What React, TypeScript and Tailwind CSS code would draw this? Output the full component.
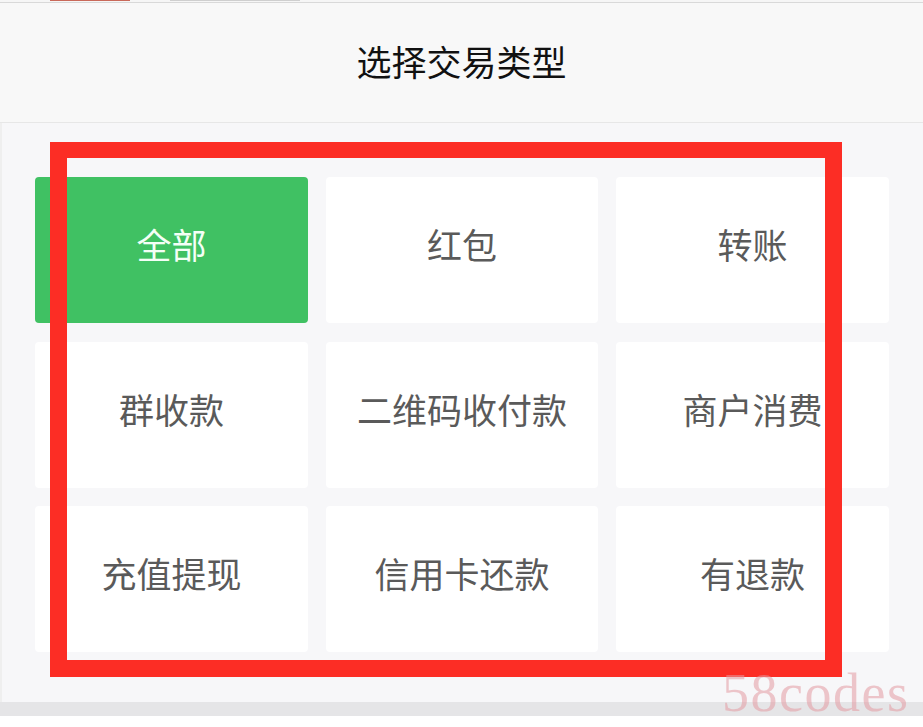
const TYPES = ['全部', '红包', '转账', '群收款', '二维码收付款', '商户消费', '充值提现', '信用卡还款', '有退款'];

export default function App() {
  const active = '全部';

  return (
    <div className="relative w-[923px] h-[727px] overflow-hidden bg-white font-['Noto_Sans_CJK_SC',sans-serif]">
      {/* cropped strip from the page above */}
      <div className="flex h-[3px] items-start border-b border-[#d9d9d9] bg-[#f6f6f6]">
        <div className="ml-[50px] h-[1px] w-[80px] bg-[#c9695a]" />
        <div className="ml-[40px] h-[1px] w-[130px] bg-[#cfcfcf]" />
      </div>

      <div className="flex h-[120px] items-center justify-center border-b border-[#e7e7e7] bg-[#f8f8f8] pb-[5px]">
        <h1 className="text-[35px] leading-none text-[#111]">选择交易类型</h1>
      </div>

      <div className="h-[579px] border-l-2 border-[#efefef] bg-[#f7f7f9] pl-[33px] pt-[54px]">
        <div className="grid grid-cols-[273px_272px_273px] auto-rows-[146px] gap-x-[18px] gap-y-[18.5px]">
          {TYPES.map(type => (
            <div
              key={type}
              className={`flex items-center justify-center rounded-[4px] pb-[11px] text-[35px] ${
                type === active ? 'bg-[#40c163] text-[#f4fff6]' : 'bg-white text-[#5a5a5a]'
              }`}
            >
              {type}
            </div>
          ))}
        </div>
      </div>

      <div className="h-[14px] bg-[#e5e5e7]" />

      {/* annotation frame */}
      <div className="absolute left-[50px] top-[142px] h-[535px] w-[792px] border-[17px] border-t-[16px] border-[#fc2d25]" />

      {/* watermark */}
      <div className="absolute left-[722px] top-[666px] font-['Liberation_Serif',serif] text-[54px] leading-none tracking-[1.5px] text-[#e39aa3]/55">
        58codes
      </div>
    </div>
  );
}
